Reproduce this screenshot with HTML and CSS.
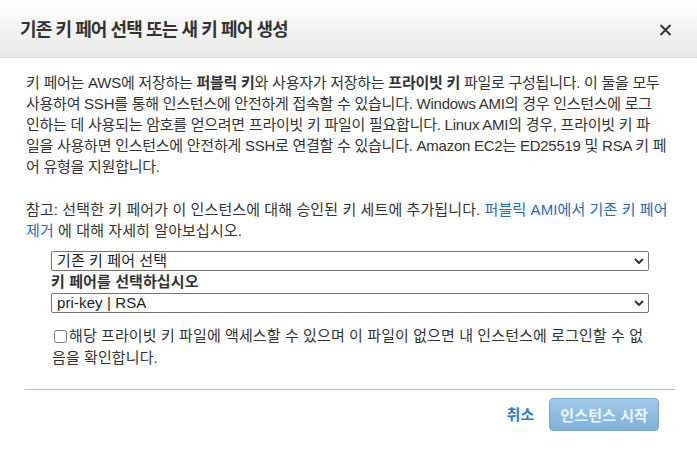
FILE: index.html
```html
<!DOCTYPE html>
<html lang="ko">
<head>
<meta charset="utf-8">
<title>키 페어</title>
<link rel="stylesheet" href="styles.css">
</head>
<body>
<div class="modal">
  <header class="modal-header">
    <h1 class="modal-title">기존 키 페어 선택 또는 새 키 페어 생성</h1>
    <button class="close" type="button" aria-label="닫기">
      <svg width="13" height="12" viewBox="0 0 13 12"><path d="M1.5 1 L11.5 11 M11.5 1 L1.5 11" stroke="#333" stroke-width="2" fill="none"/></svg>
    </button>
  </header>
  <div class="modal-body">
    <div class="content">
      <p class="intro">키 페어는 AWS에 저장하는 <b>퍼블릭 키</b>와 사용자가 저장하는 <b>프라이빗 키</b> 파일로 구성됩니다. 이 둘을 모두<br>사용하여 SSH를 통해 인스턴스에 안전하게 접속할 수 있습니다. Windows AMI의 경우 인스턴스에 로그<br>인하는 데 사용되는 암호를 얻으려면 프라이빗 키 파일이 필요합니다. Linux AMI의 경우, 프라이빗 키 파<br>일을 사용하면 인스턴스에 안전하게 SSH로 연결할 수 있습니다. Amazon EC2는 ED25519 및 RSA 키 페<br>어 유형을 지원합니다.</p>
      <p class="note">참고: 선택한 키 페어가 이 인스턴스에 대해 승인된 키 세트에 추가됩니다. <a class="link" href="#">퍼블릭 AMI에서 기존 키 페어 제거</a> 에 대해 자세히 알아보십시오.</p>
      <div class="form">
        <select class="select"><option>기존 키 페어 선택</option></select>
        <div class="field-label">키 페어를 선택하십시오</div>
        <select class="select"><option>pri-key | RSA</option></select>
        <label class="ack"><input class="check" type="checkbox">해당 프라이빗 키 파일에 액세스할 수 있으며 이 파일이 없으면 내 인스턴스에 로그인할 수 없음을 확인합니다.</label>
      </div>
    </div>
  </div>
  <footer class="modal-footer">
    <a class="cancel" href="#">취소</a>
    <button class="primary" type="button" disabled>인스턴스 시작</button>
  </footer>
</div>
</body>
</html>
```
FILE: styles.css
```css
html, body {
  margin: 0;
  padding: 0;
  background: #fff;
}
body {
  font-family: "Liberation Sans", "Noto Sans CJK KR", sans-serif;
  font-size: 15px;
  line-height: 21px;
  letter-spacing: 0.1px;
  color: #333;
}
.modal {
  width: 697px;
  height: 452px;
  background: #fff;
}
.modal-header {
  height: 58px;
  box-sizing: border-box;
  border-bottom: 1px solid #d4d4d4;
  background: linear-gradient(#ffffff, #e8e8e8);
  display: flex;
  align-items: center;
  justify-content: space-between;
  padding: 3px 25px 0 20px;
}
.modal-title {
  margin: 0;
  font-size: 18px;
  font-weight: 700;
  letter-spacing: -0.9px;
  color: #333;
  line-height: 24px;
}
.close {
  border: 0;
  background: none;
  padding: 0;
  width: 13px;
  height: 12px;
  display: flex;
}
.modal-body {
  padding: 14px 22px 0 25px;
}
.content {
  border-bottom: 1px solid #bcbcbc;
  padding-bottom: 20px;
}
.intro {
  margin: 0 0 22px 1px;
  letter-spacing: -0.25px;
}
.note {
  margin: 0 0 10px 1px;
}
.link {
  color: #1f6bb8;
  text-decoration: none;
}
.form {
  margin: 0 26px;
  display: flex;
  flex-direction: column;
}
.select {
  appearance: none;
  -webkit-appearance: none;
  height: 20px;
  box-sizing: border-box;
  border: 1px solid #767676;
  border-radius: 2px;
  padding: 0 20px 0 5px;
  font-family: "Liberation Sans", "Noto Sans CJK KR", sans-serif;
  font-size: 15px;
  letter-spacing: 0.1px;
  line-height: 18px;
  color: #222;
  background: #fff url("data:image/svg+xml;utf8,<svg xmlns='http://www.w3.org/2000/svg' width='10' height='6' viewBox='0 0 10 6'><path d='M1 1 L5 5 L9 1' stroke='%23333' stroke-width='2' fill='none'/></svg>") no-repeat right 4px center;
}
.field-label {
  font-weight: 700;
  line-height: 22px;
  color: #333;
}
.ack {
  margin-top: 12px;
  line-height: 22px;
  margin-left: 1px;
}
.check {
  width: 13px;
  height: 13px;
  margin: 0 2px 0 2px;
  vertical-align: -2px;
}
.modal-footer {
  display: flex;
  justify-content: flex-end;
  align-items: center;
  gap: 15px;
  padding: 8px 38px 0 0;
}
.cancel {
  color: #2a7bcf;
  font-weight: 700;
  text-decoration: none;
}
.primary {
  height: 33px;
  padding: 0 10px;
  border: 1px solid #7aa8cf;
  border-radius: 4px;
  background: linear-gradient(#a0caea, #7eb0d8);
  color: #eef5fb;
  font-family: "Liberation Sans", "Noto Sans CJK KR", sans-serif;
  font-size: 15px;
  letter-spacing: 0.1px;
  font-weight: 700;
}
```
